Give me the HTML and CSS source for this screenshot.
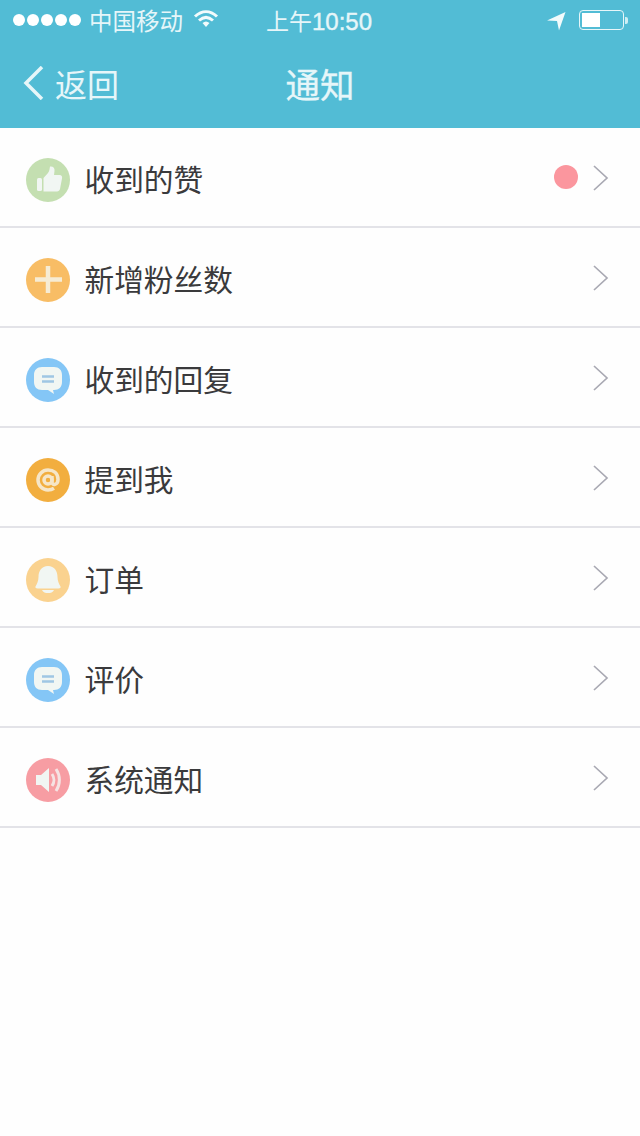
FILE: index.html
```html
<!DOCTYPE html>
<html lang="zh">
<head>
<meta charset="utf-8">
<title>通知</title>
<link rel="stylesheet" href="styles.css">
</head>
<body>
<header class="top">
  <div class="status">
    <div class="status-left">
      <div class="dots"><i></i><i></i><i></i><i></i><i></i></div>
      <span class="carrier">中国移动</span>
      <svg class="wifi" width="26" height="20" viewBox="0 0 26 20"><path d="M2 7.500C9 1 17 1 24 7.500" class="wifi-arc"/><path d="M6 11.500c4.500-4 9.500-4 14 0" class="wifi-arc"/><path d="M9.500 14c2.500-2 4.500-2 7 0L13 18z" class="wifi-fill"/></svg>
    </div>
    <div class="clock">上午<b>10:50</b></div>
    <div class="status-right">
      <svg class="loc" width="20" height="20" viewBox="0 0 20 20"><path d="M0 9.500 18.500 1 12 19.500 10 10z" class="wifi-fill"/></svg>
      <div class="battery"><div class="battery-level"></div></div>
      <div class="battery-cap"></div>
    </div>
  </div>
  <nav class="nav">
    <div class="back">
      <svg width="22" height="34" viewBox="0 0 22 34"><path d="M19 1 3 17l16 16" class="back-arrow"/></svg>
      <span>返回</span>
    </div>
    <h1 class="title">通知</h1>
  </nav>
</header>
<ul class="list">
  <li class="row">
    <span class="icon green"><svg width="44" height="44" viewBox="0 0 44 44"><rect x="11" y="20" width="5" height="13" rx="1.500" class="glyph"/><path d="M17.500 20 22 15c1.500-2 1.500-4 2-6.500 3-.5 5 1.500 4.500 4.500L28 17h5.500c2 0 3 1.500 2.500 3.500l-2 10.500c-.4 1.500-1.500 2.500-3 2.500H17.500z" class="glyph"/></svg></span>
    <span class="label">收到的赞</span>
    <span class="badge"></span>
    <svg class="chev" width="16" height="26" viewBox="0 0 16 26"><path d="M1 1l13 12L1 25"/></svg>
  </li>
  <li class="row">
    <span class="icon orange"><svg width="44" height="44" viewBox="0 0 44 44"><path d="M22 8v27M9 21.500h27" class="plus"/></svg></span>
    <span class="label">新增粉丝数</span>
    <svg class="chev" width="16" height="26" viewBox="0 0 16 26"><path d="M1 1l13 12L1 25"/></svg>
  </li>
  <li class="row">
    <span class="icon blue"><svg width="44" height="44" viewBox="0 0 44 44"><path d="M16 9h12c5 0 8 3 8 8v7c0 5-3 8-8 8h-1l1 4-6-4h-6c-5 0-8-3-8-8v-7c0-5 3-8 8-8z" class="glyph"/><path d="M16 18.500h12M16 23.500h12" class="lines"/></svg></span>
    <span class="label">收到的回复</span>
    <svg class="chev" width="16" height="26" viewBox="0 0 16 26"><path d="M1 1l13 12L1 25"/></svg>
  </li>
  <li class="row">
    <span class="icon amber"><svg width="44" height="44" viewBox="0 0 44 44"><circle cx="22" cy="22" r="4" class="at"/><path d="M26 18v6c0 4 6 3 6-2.500C32 15 27.500 12 22 12s-10 4.500-10 10 4.500 10 10 10c2.500 0 4.500-.7 6-1.700" class="at"/></svg></span>
    <span class="label">提到我</span>
    <svg class="chev" width="16" height="26" viewBox="0 0 16 26"><path d="M1 1l13 12L1 25"/></svg>
  </li>
  <li class="row">
    <span class="icon sand"><svg width="44" height="44" viewBox="0 0 44 44"><path d="M22 8c6.500 0 9.500 5 9.500 11 0 4 1.500 7 3 9.500.5 1-.5 2-2 2h-21c-1.500 0-2.500-1-2-2 1.500-2.500 3-5.500 3-9.500C12.500 13 15.500 8 22 8z" class="glyph"/><path d="M16 32h12c-1 2.500-3.500 3-6 3s-5-.5-6-3z" class="glyph"/></svg></span>
    <span class="label">订单</span>
    <svg class="chev" width="16" height="26" viewBox="0 0 16 26"><path d="M1 1l13 12L1 25"/></svg>
  </li>
  <li class="row">
    <span class="icon blue"><svg width="44" height="44" viewBox="0 0 44 44"><path d="M16 9h12c5 0 8 3 8 8v7c0 5-3 8-8 8h-1l1 4-6-4h-6c-5 0-8-3-8-8v-7c0-5 3-8 8-8z" class="glyph"/><path d="M16 18.500h12M16 23.500h12" class="lines"/></svg></span>
    <span class="label">评价</span>
    <svg class="chev" width="16" height="26" viewBox="0 0 16 26"><path d="M1 1l13 12L1 25"/></svg>
  </li>
  <li class="row">
    <span class="icon pink"><svg width="44" height="44" viewBox="0 0 44 44"><path d="M10 17h5l8-7v24l-8-7h-5z" class="glyph"/><path d="M26 16c2.500 3.500 2.500 8.500 0 12M30 11c4.500 6.500 4.500 15.500 0 22" class="wave"/></svg></span>
    <span class="label">系统通知</span>
    <svg class="chev" width="16" height="26" viewBox="0 0 16 26"><path d="M1 1l13 12L1 25"/></svg>
  </li>
</ul>
</body>
</html>
```
FILE: styles.css
```css
* { box-sizing: border-box; }
html, body { margin: 0; padding: 0; }
body {
  width: 640px;
  height: 1136px;
  overflow: hidden;
  background: #fefefe;
  font-family: "Noto Sans CJK SC", "Liberation Sans", sans-serif;
  color: #3a3a3c;
}
.top { background: #52bcd5; color: #e6f6f9; height: 128px; }
.status {
  height: 40px;
  display: flex;
  align-items: center;
  justify-content: space-between;
  padding: 0 12px 0 13px;
  position: relative;
}
.status-left { display: flex; align-items: center; }
.dots { display: flex; gap: 2px; margin-right: 8px; }
.dots i { width: 12px; height: 12px; border-radius: 50%; background: #fff; display: block; }
.carrier { font-size: 23.500px; line-height: 40px; }
.wifi { margin-left: 10px; margin-top: -2px; }
.wifi-arc { fill: none; stroke: #f2fbfc; stroke-width: 3; }
.wifi-fill { fill: #f2fbfc; }
.clock {
  position: absolute;
  left: 266px;
  top: 0;
  line-height: 40px;
  font-size: 23px;
  white-space: nowrap;
}
.clock b { font-family: "Liberation Sans", sans-serif; font-weight: 400; font-size: 24px; -webkit-text-stroke: 0.4px #e6f6f9; }
.status-right { display: flex; align-items: center; }
.loc { margin-right: 12px; margin-top: 2px; }
.battery {
  width: 45px;
  height: 20px;
  border: 1.500px solid #e6f6f9;
  border-radius: 4px;
  padding: 2px;
}
.battery-level { width: 18px; height: 100%; background: #fff; }
.battery-cap { width: 3px; height: 7px; background: #cdeef4; border-radius: 0 2px 2px 0; margin-left: 1px; }
.nav {
  height: 88px;
  padding-bottom: 2px;
  display: flex;
  align-items: center;
  justify-content: center;
  position: relative;
}
.back {
  position: absolute;
  left: 23px;
  top: 0;
  height: 86px;
  display: flex;
  align-items: center;
  gap: 10px;
  font-size: 32px;
}
.back-arrow { fill: none; stroke: #e6f6f9; stroke-width: 3.500; }
.title { margin: 0; font-size: 34.500px; font-weight: 400; line-height: 86px; -webkit-text-stroke: 0.3px #e6f6f9; }
.list { list-style: none; margin: 0; padding: 0; }
.row {
  height: 100px;
  display: flex;
  align-items: center;
  padding: 6px 31px 0 26px;
  border-bottom: 2px solid #e3e3e8;
}
.icon { width: 44px; height: 44px; border-radius: 50%; flex: none; display: block; }
.icon svg { display: block; filter: blur(0.5px); }
.green { background: #c4dfb1; }
.orange { background: #f8bd65; }
.blue { background: #84c6f6; }
.amber { background: #f2ae3f; }
.sand { background: #fad28f; }
.pink { background: #f79da3; }
.glyph { fill: #f1f6f3; }
.plus { stroke: #f6ecd4; stroke-width: 4.500; fill: none; }
.lines { stroke: #9fc6e4; stroke-width: 2.500; fill: none; }
.at { fill: none; stroke: #f6e6c8; stroke-width: 3.500; }
.wave { fill: none; stroke: #f6e3e3; stroke-width: 3; }
.label { margin: 0 0 2px 14.500px; font-size: 29.700px; line-height: 40px; flex: 1; }
.badge { width: 24px; height: 24px; border-radius: 50%; background: #fb969e; margin: 0 15px 6px 0; }
.chev { flex: none; margin-bottom: 4px; }
.chev path { fill: none; stroke: #a9a9b3; stroke-width: 1.700; }
```
